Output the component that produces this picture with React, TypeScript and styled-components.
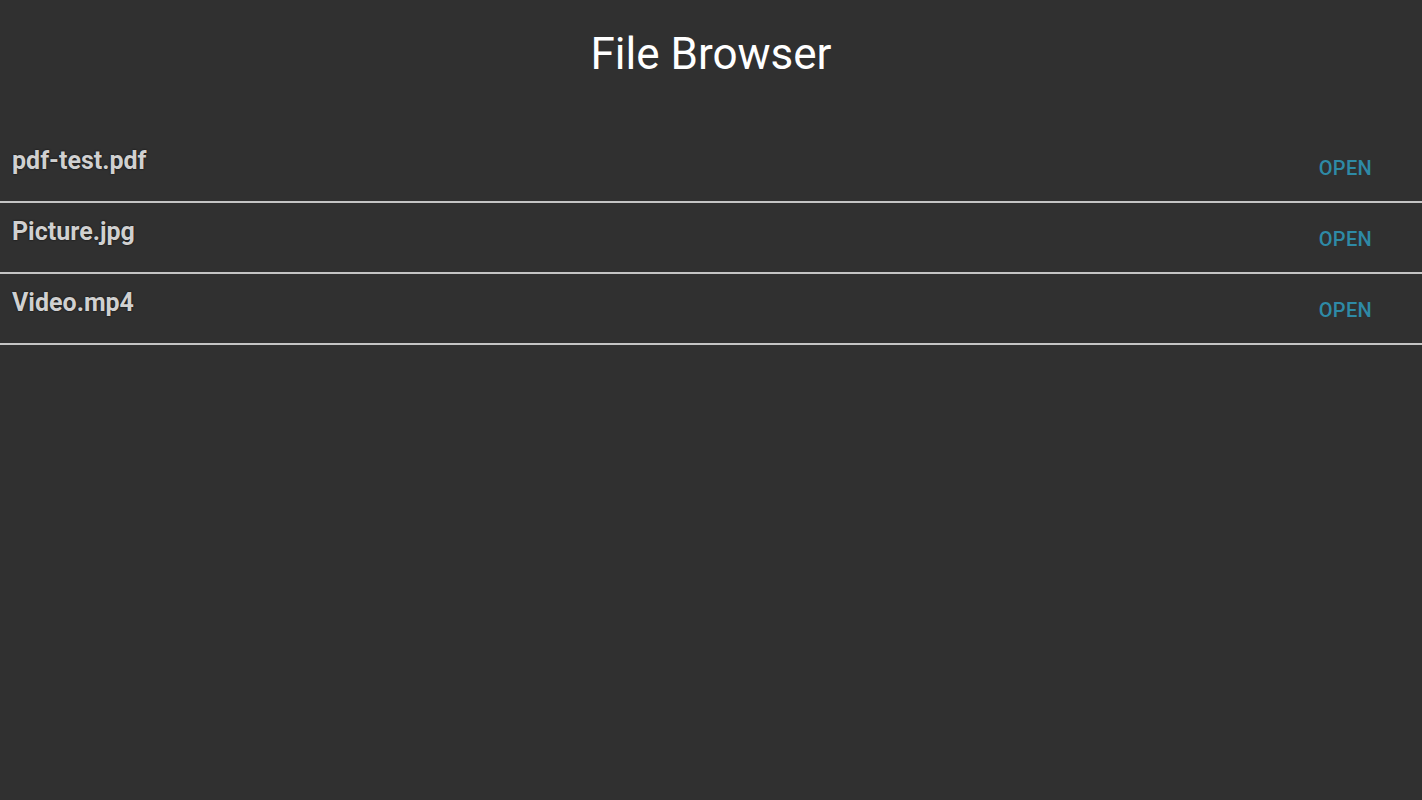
import React from "react";
import styled, { createGlobalStyle } from "styled-components";

const Global = createGlobalStyle`
  html, body { margin: 0; padding: 0; background: #303030; }
  body { font-family: Roboto, "Noto Sans", sans-serif; }
`;

const Page = styled.div`
  min-height: 800px;
  background: #303030;
  display: flex;
  flex-direction: column;
`;

const Title = styled.h1`
  margin: 0;
  padding: 27px 0 0;
  height: 132px;
  box-sizing: border-box;
  text-align: center;
  font-family: Roboto, sans-serif;
  font-weight: 400;
  font-size: 44px;
  line-height: 54px;
  color: #ffffff;
`;

const List = styled.ul`
  list-style: none;
  margin: 0;
  padding: 0;
`;

const Row = styled.li`
  display: flex;
  justify-content: space-between;
  height: 69px;
  border-bottom: 2px solid #c4c4c4;
  box-sizing: content-box;
`;

const Name = styled.span`
  padding: 14px 0 0 12px;
  font-family: Roboto, sans-serif;
  font-weight: 700;
  font-size: 25px;
  line-height: 30px;
  color: #d0d0d0;
  text-shadow: 0 0 2px rgba(0, 0, 0, 0.9);
`;

const OpenButton = styled.button`
  align-self: flex-start;
  margin: 24px 50px 0 0;
  padding: 0;
  background: none;
  border: none;
  font-family: Roboto, sans-serif;
  font-weight: 500;
  font-size: 20px;
  line-height: 24px;
  letter-spacing: 0.3px;
  color: #2e8aa6;
  text-transform: uppercase;
`;

const files = ["pdf-test.pdf", "Picture.jpg", "Video.mp4"];

export default function App() {
  return (
    <Page>
      <Global />
      <Title>File Browser</Title>
      <List>
        {files.map((f) => (
          <Row key={f}>
            <Name>{f}</Name>
            <OpenButton>Open</OpenButton>
          </Row>
        ))}
      </List>
    </Page>
  );
}
